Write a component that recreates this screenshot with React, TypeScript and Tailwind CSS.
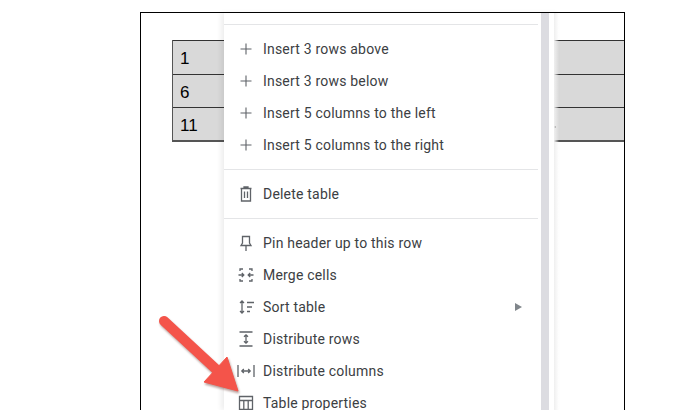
import React from 'react';

type Item = { label: string; icon: React.ReactNode; submenu?: boolean };

const stroke = {
  fill: 'none',
  stroke: '#5f6368',
  strokeWidth: 1.3,
};

function Glyph({ children }: { children: React.ReactNode }) {
  return (
    <svg width="18" height="18" viewBox="0 0 18 18" className="shrink-0" {...stroke}>
      {children}
    </svg>
  );
}

const PlusIcon = (
  <Glyph>
    <path d="M9 3.5v11M3.5 9h11" strokeWidth="1.1" />
  </Glyph>
);

const TrashIcon = (
  <Glyph>
    <path d="M3.5 3.5h11M7 3.5V2h4v1.5M4.500 3.500V16h9V3.500M7.500 6.500v6.500M10.500 6.500v6.500" />
  </Glyph>
);

const PinIcon = (
  <Glyph>
    <path d="M5.500 2.500h7v6.500l1.500 2.500H4L5.500 9zM9 11.500V17" />
  </Glyph>
);

const MergeIcon = (
  <Glyph>
    <path d="M3 5V3h3M12 3h3v2M3 13v2h3M12 15h3v-2" />
    <path d="M1.500 9h5M4.800 7 6.800 9l-2 2M16.500 9h-5M13.200 7l-2 2 2 2" />
  </Glyph>
);

const SortIcon = (
  <Glyph>
    <path d="M5 3v12M3 5l2-2 2 2M3 13l2 2 2-2M10 4.500h7M10 9h5M10 13.500h3" />
  </Glyph>
);

const RowsIcon = (
  <Glyph>
    <path d="M2.500 2h13M2.500 16h13M9 5v8M7 6.800 9 4.800l2 2M7 11.200l2 2 2-2" />
  </Glyph>
);

const ColumnsIcon = (
  <Glyph>
    <path d="M1 3v12M17 3v12M5 9h8M6.800 7 4.800 9l2 2M11.200 7l2 2-2 2" />
  </Glyph>
);

const TableIcon = (
  <Glyph>
    <path d="M2.500 2.500h13v13h-13zM2.500 6.500h13M6.800 6.500v9M11.200 6.500v9" />
  </Glyph>
);

const insertItems: Item[] = [
  { label: 'Insert 3 rows above', icon: PlusIcon },
  { label: 'Insert 3 rows below', icon: PlusIcon },
  { label: 'Insert 5 columns to the left', icon: PlusIcon },
  { label: 'Insert 5 columns to the right', icon: PlusIcon },
];

const lowerItems: Item[] = [
  { label: 'Pin header up to this row', icon: PinIcon },
  { label: 'Merge cells', icon: MergeIcon },
  { label: 'Sort table', icon: SortIcon, submenu: true },
  { label: 'Distribute rows', icon: RowsIcon },
  { label: 'Distribute columns', icon: ColumnsIcon },
  { label: 'Table properties', icon: TableIcon },
];

function MenuRow({ item }: { item: Item }) {
  return (
    <div className="flex h-8 items-center pl-[13px] pr-[16px]">
      <span className="flex w-[26px] shrink-0 items-center">{item.icon}</span>
      <span className="flex-1 text-[14px] tracking-[0.2px] text-[#3c4043]">{item.label}</span>
      {item.submenu && (
        <span className="h-0 w-0 border-y-[4px] border-l-[7px] border-y-transparent border-l-[#80868b]" />
      )}
    </div>
  );
}

function Divider() {
  return <div className="my-2 h-px bg-[#e4e5e7]" />;
}

function TableRow({ value, last }: { value: string; last?: boolean }) {
  return (
    <div
      className={`flex items-center border-t border-t-[#333] pl-[7px] text-[17px] text-black ${
        last ? 'h-[35px] border-b-2 border-b-[#555]' : 'h-[33.500px]'
      }`}
    >
      <span className="mt-[3px]">{value}</span>
    </div>
  );
}

export default function App() {
  return (
    <div className="relative h-[410px] w-[699px] overflow-hidden bg-white font-['Roboto',sans-serif]">
      {/* document page, runs off the bottom */}
      <div className="ml-[140px] mt-3 h-[398px] w-[485px] border-x border-t border-black pl-[31px] pt-[27px] font-['Liberation_Sans',sans-serif]">
        <div className="border-l border-[#555] bg-[#d9d9d9]">
          <TableRow value="1" />
          <TableRow value="6" />
          <TableRow value="11" last />
        </div>
      </div>

      {/* stray full stop from the hidden cell */}
      <div className="absolute left-[554px] top-[126px] h-0.5 w-0.5 bg-[#444]" />

      {/* context menu over the table */}
      <div className="absolute left-[224px] top-[13px] flex h-[397px] shadow-[-3px_0_5px_rgba(0,0,0,0.07)]">
        <div className="w-[317px] bg-white pr-[3px] pt-[11px]">
          <div className="mb-2 h-px bg-[#e4e5e7]" />
          {insertItems.map(item => (
            <MenuRow key={item.label} item={item} />
          ))}
          <Divider />
          <MenuRow item={{ label: 'Delete table', icon: TrashIcon }} />
          <Divider />
          {lowerItems.map(item => (
            <MenuRow key={item.label} item={item} />
          ))}
        </div>
        <div className="w-2 bg-[#dcdce1]" />
        <div className="w-[5px] bg-white" />
        <div className="w-[5px] bg-gradient-to-r from-[#efefef] to-[#d9d9d9]/0" />
      </div>

      {/* callout arrow */}
      <svg
        className="pointer-events-none absolute left-0 top-0 drop-shadow-[1px_2px_1px_rgba(90,40,30,0.45)]"
        width="699"
        height="410"
        viewBox="0 0 699 410"
      >
        <path d="M164 321 L219 372" stroke="#f4544a" strokeWidth="10" strokeLinecap="round" fill="none" />
        <path d="M227 357 L238 391 L204 382 Z" fill="#f4544a" stroke="#f4544a" strokeWidth="1" />
      </svg>
    </div>
  );
}
